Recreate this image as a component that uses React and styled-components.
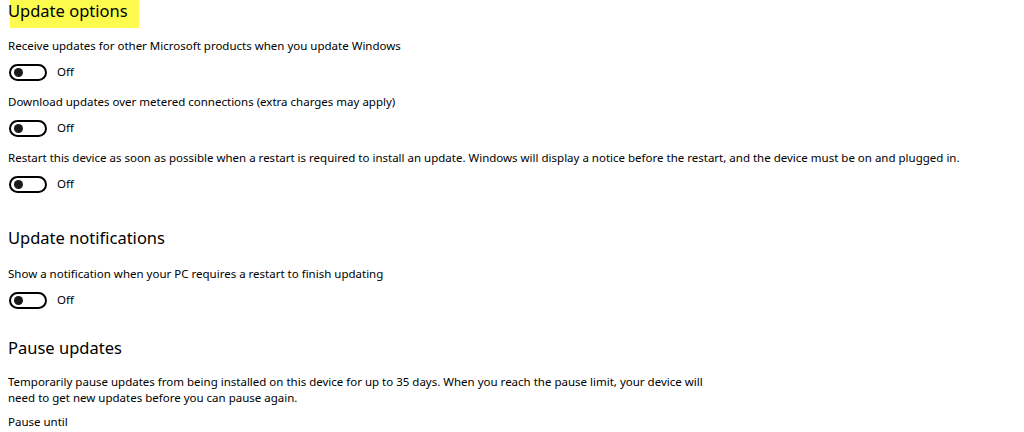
import React from "react";
import styled, { createGlobalStyle } from "styled-components";

const Global = createGlobalStyle`
  html, body { margin: 0; padding: 0; background: #ffffff; }
  body { font-family: "Noto Sans", "Open Sans", sans-serif; color: #000; }
`;

const Page = styled.div`
  width: 1024px;
  height: 432px;
  overflow: hidden;
  padding-left: 8px;
  box-sizing: border-box;
  background: #fff;
`;

const Section = styled.section`
  display: flex;
  flex-direction: column;
  margin-top: ${(p) => p.$top || 0}px;
`;

const Heading = styled.h2`
  margin: 0;
  font-weight: 400;
  font-size: 16.5px;
  line-height: 26px;
  height: 26px;
  color: #000;
  align-self: flex-start;
  ${(p) =>
    p.$highlight &&
    `
    background: #fdfc4e;
    margin-left: 2px;
    padding: 0 11px 0 0;
    text-indent: -2px;
    height: 28px;
    line-height: 22px;
  `}
`;

const Label = styled.p`
  margin: 0;
  font-size: 11.5px;
  line-height: 16px;
  color: #000;
`;

const Setting = styled.div`
  display: flex;
  flex-direction: column;
  margin-top: ${(p) => p.$top || 0}px;
`;

const ToggleRow = styled.div`
  display: flex;
  align-items: center;
  gap: 10px;
  height: 18px;
  margin-top: 9px;
  margin-left: 1px;
`;

const Track = styled.span`
  box-sizing: border-box;
  width: 38px;
  height: 17px;
  border: 2px solid #000;
  border-radius: 9px;
  display: flex;
  align-items: center;
  padding-left: 3px;
`;

const Knob = styled.span`
  width: 9px;
  height: 9px;
  border-radius: 50%;
  background: #1a1a1a;
`;

const State = styled.span`
  font-size: 11.5px;
  line-height: 16px;
  color: #000;
`;

const Paragraph = styled.p`
  margin: 0;
  margin-top: ${(p) => p.$top || 0}px;
  font-size: 11.5px;
  line-height: 16px;
  color: #000;
`;

function Toggle() {
  return (
    <ToggleRow>
      <Track>
        <Knob />
      </Track>
      <State>Off</State>
    </ToggleRow>
  );
}

function SettingItem({ label, top }) {
  return (
    <Setting $top={top}>
      <Label>{label}</Label>
      <Toggle />
    </Setting>
  );
}

export default function App() {
  return (
    <>
      <Global />
      <Page>
        <Section>
          <Heading $highlight>Update options</Heading>
          <SettingItem
            top={10}
            label="Receive updates for other Microsoft products when you update Windows"
          />
          <SettingItem
            top={13}
            label="Download updates over metered connections (extra charges may apply)"
          />
          <SettingItem
            top={13}
            label="Restart this device as soon as possible when a restart is required to install an update. Windows will display a notice before the restart, and the device must be on and plugged in."
          />
        </Section>
        <Section $top={32}>
          <Heading>Update notifications</Heading>
          <SettingItem
            top={15}
            label="Show a notification when your PC requires a restart to finish updating"
          />
        </Section>
        <Section $top={26}>
          <Heading>Pause updates</Heading>
          <Paragraph $top={13}>
            Temporarily pause updates from being installed on this device for up to 35 days. When you reach the pause limit, your device will
            <br />
            need to get new updates before you can pause again.
          </Paragraph>
          <Paragraph $top={8}>Pause until</Paragraph>
        </Section>
      </Page>
    </>
  );
}
